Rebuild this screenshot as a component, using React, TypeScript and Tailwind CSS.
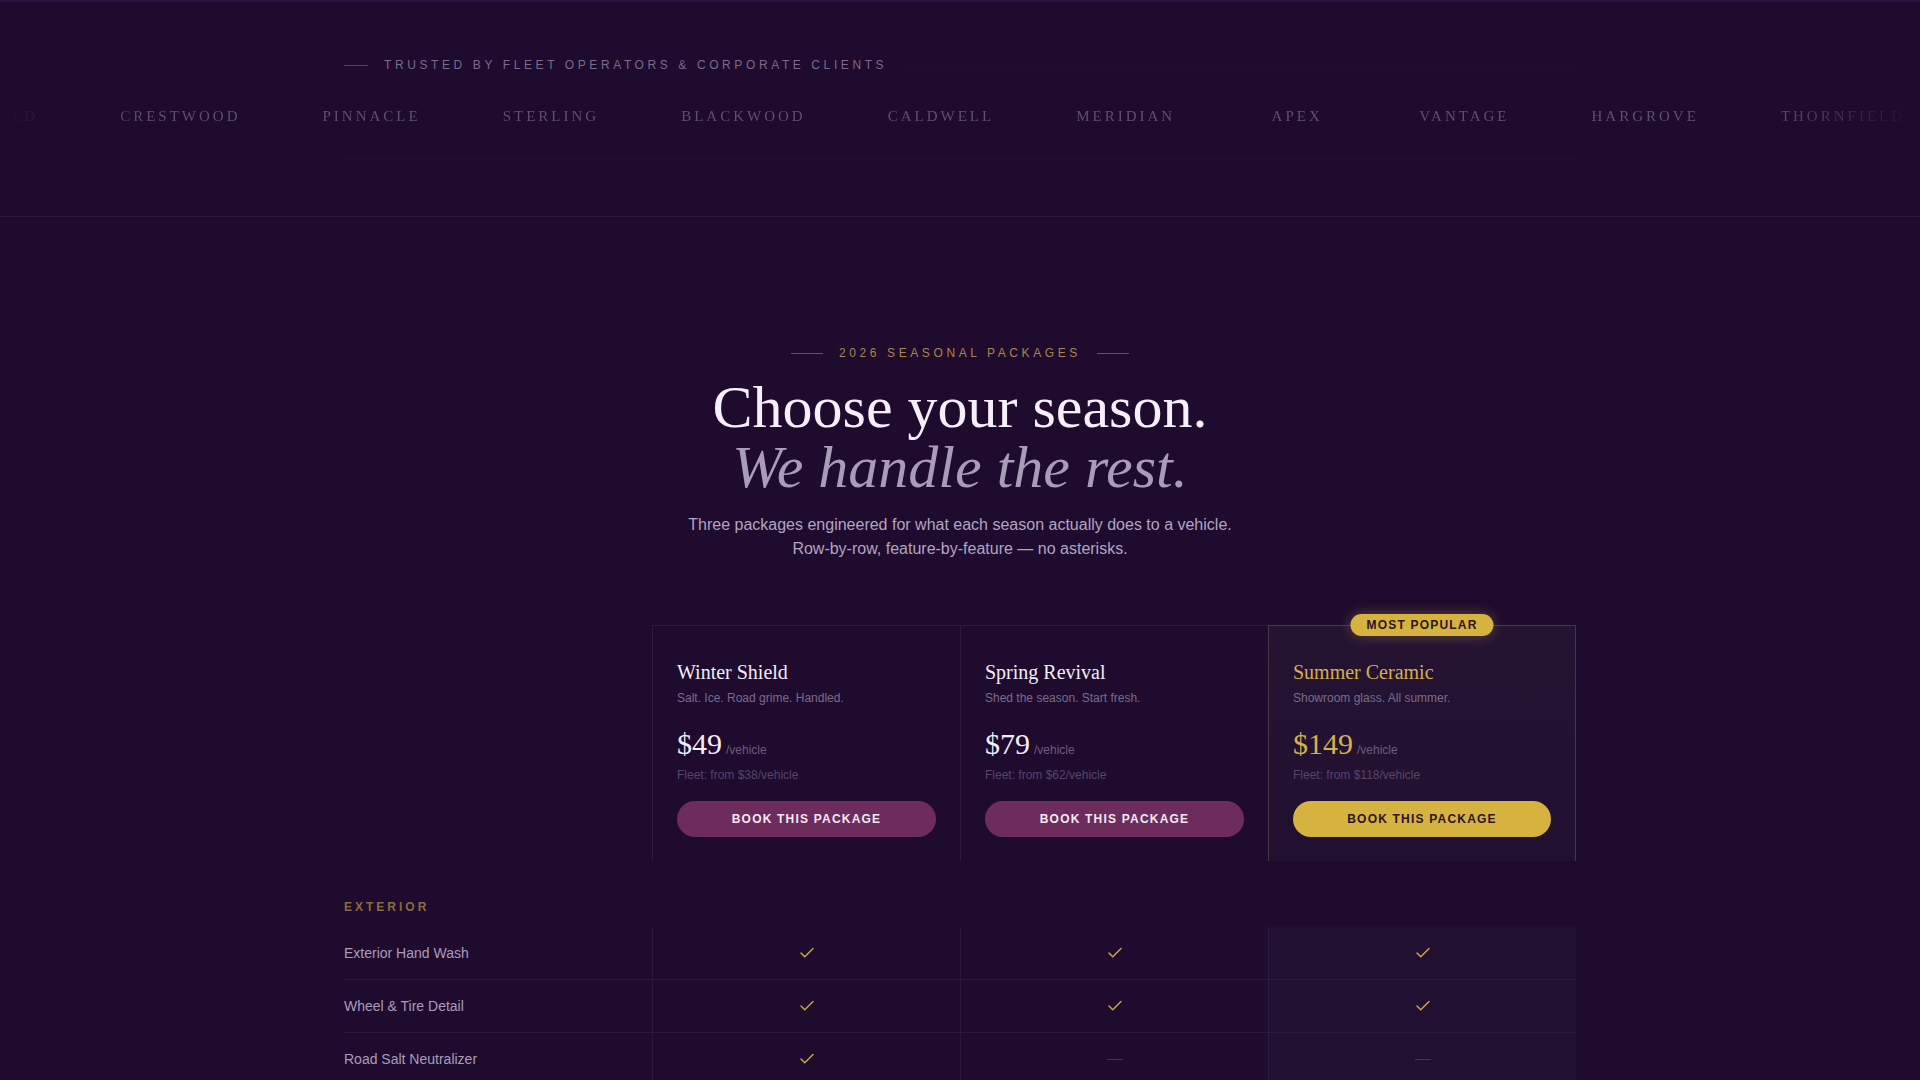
import { Fragment } from 'react';

const clients = [
  'THORNFIELD',
  'CRESTWOOD',
  'PINNACLE',
  'STERLING',
  'BLACKWOOD',
  'CALDWELL',
  'MERIDIAN',
  'APEX',
  'VANTAGE',
  'HARGROVE',
  'THORNFIELD',
  'CRESTWOOD',
];

const plans = [
  {
    name: 'Winter Shield',
    tagline: 'Salt. Ice. Road grime. Handled.',
    price: '$49',
    fleet: 'Fleet: from $38/vehicle',
    popular: false,
  },
  {
    name: 'Spring Revival',
    tagline: 'Shed the season. Start fresh.',
    price: '$79',
    fleet: 'Fleet: from $62/vehicle',
    popular: false,
  },
  {
    name: 'Summer Ceramic',
    tagline: 'Showroom glass. All summer.',
    price: '$149',
    fleet: 'Fleet: from $118/vehicle',
    popular: true,
  },
];

type Row = { label: string; values: boolean[] };

const groups: { title: string; rows: Row[] }[] = [
  {
    title: 'EXTERIOR',
    rows: [
      { label: 'Exterior Hand Wash', values: [true, true, true] },
      { label: 'Wheel & Tire Detail', values: [true, true, true] },
      { label: 'Road Salt Neutralizer', values: [true, false, false] },
      { label: 'Undercarriage Flush', values: [true, true, false] },
      { label: 'Clay Bar Decontamination', values: [false, true, true] },
      { label: '12-Month Ceramic Coating', values: [false, false, true] },
    ],
  },
  {
    title: 'INTERIOR',
    rows: [
      { label: 'Vacuum & Wipe Down', values: [true, true, true] },
      { label: 'Salt Stain Extraction', values: [true, false, false] },
      { label: 'Pollen & Allergen Treatment', values: [false, true, true] },
    ],
  },
];

const CheckIcon = () => (
  <svg
    width="18"
    height="18"
    viewBox="0 0 24 24"
    fill="none"
    stroke="currentColor"
    strokeWidth="2"
    strokeLinecap="round"
    strokeLinejoin="round"
    className="text-[#c9a545]"
  >
    <path d="M20 6 9 17l-5-5" />
  </svg>
);

const TrustedBar = () => (
  <section className="border-t-2 border-b border-t-[#2c1440] border-b-[#2a1a3c] pt-[55px] pb-14">
    <div className="max-w-7xl mx-auto px-6">
      <div className="flex items-center gap-4">
        <span className="w-6 h-px bg-[#5a4632]" />
        <span className="text-xs leading-4 tracking-[0.3em] text-[#7a6c8a]">
          TRUSTED BY FLEET OPERATORS &amp; CORPORATE CLIENTS
        </span>
        <span className="flex-1 h-px bg-[#21102c]" />
      </div>
    </div>

    {/* client names, faded out at both edges */}
    <div className="mt-8 overflow-hidden [mask-image:linear-gradient(to_right,transparent,black_8%,black_92%,transparent)]">
      <div className="flex items-center gap-[82px] -ml-[86px] whitespace-nowrap">
        {clients.map((c, i) => (
          <span
            key={i}
            className="shrink-0 min-w-20 text-center font-['Liberation_Serif',serif] text-[15px] leading-[22px] tracking-[0.2em] text-[#5f4f70]"
          >
            {c}
          </span>
        ))}
      </div>
    </div>

    <div className="max-w-7xl mx-auto px-6">
      <div className="mt-8 h-px bg-[#21102c]" />
    </div>
  </section>
);

const PlanCard = ({ plan }) => {
  const popular = plan.popular;
  return (
    <div
      className={
        popular
          ? 'relative border border-b-0 border-[#4a3840] bg-gradient-to-b from-[#251332] to-[#211030] px-6 pt-8 pb-6'
          : 'relative border-t border-l border-[#2e1c40] px-6 pt-8 pb-6'
      }
    >
      {popular && (
        <span className="absolute left-1/2 -translate-x-1/2 -top-3 rounded-full bg-[#d6b23e] px-4 py-[3px] text-xs leading-4 font-bold tracking-widest text-[#2a1428] shadow-[0_0_14px_rgba(214,178,62,0.35)] whitespace-nowrap">
          MOST POPULAR
        </span>
      )}
      <h3
        className={
          popular
            ? "font-['Liberation_Serif',serif] text-xl leading-7 text-[#d6b04a]"
            : "font-['Liberation_Serif',serif] text-xl leading-7 text-[#f3eef7]"
        }
      >
        {plan.name}
      </h3>
      <p className="mt-1 text-xs leading-4 text-[#7b6c8b]">{plan.tagline}</p>
      <div className="mt-5 flex items-baseline gap-1">
        <span
          className={
            popular
              ? "font-['Liberation_Serif',serif] text-3xl leading-9 text-[#d6b04a]"
              : "font-['Liberation_Serif',serif] text-3xl leading-9 text-[#f3eef7]"
          }
        >
          {plan.price}
        </span>
        <span className="text-xs text-[#6c5d7c]">/vehicle</span>
      </div>
      <p className="mt-[5px] text-xs leading-4 text-[#56476a]">{plan.fleet}</p>
      <button
        className={
          popular
            ? 'mt-[18px] w-full h-9 rounded-full bg-[#d6b23e] text-xs font-bold tracking-widest text-[#2a1428]'
            : 'mt-[18px] w-full h-9 rounded-full bg-[#6d2c5c] text-xs font-bold tracking-widest text-[#f4e9f1]'
        }
      >
        BOOK THIS PACKAGE
      </button>
    </div>
  );
};

const FeatureRow = ({ row }: { row: Row }) => (
  <div className="grid grid-cols-4 border-b border-[#2c1a3e]">
    <div className="h-[52px] flex items-center text-sm text-[#ab9dba]">{row.label}</div>
    {row.values.map((v, i) => (
      <div
        key={i}
        className={
          i === 2
            ? 'flex items-center justify-center border-l border-[#2c1a3e] bg-[#221032]'
            : 'flex items-center justify-center border-l border-[#2c1a3e]'
        }
      >
        {v ? <CheckIcon /> : <span className="block w-4 h-px bg-[#46365a]" />}
      </div>
    ))}
  </div>
);

const Pricing = () => (
  <section className="pt-32 pb-32">
    <div className="max-w-7xl mx-auto px-6">
      <div className="flex items-center justify-center gap-4">
        <span className="w-8 h-px bg-[#6a5535]" />
        <span className="text-xs leading-4 tracking-[0.3em] text-[#a8884a]">2026 SEASONAL PACKAGES</span>
        <span className="w-8 h-px bg-[#6a5535]" />
      </div>

      <h2 className="mt-4 text-center font-['Liberation_Serif',serif] text-6xl leading-none text-[#f5f0fa]">
        Choose your season.
        <br />
        <em className="text-[#a99cb6]">We handle the rest.</em>
      </h2>

      <p className="mt-4 text-center text-base leading-6 text-[#b2a5c0]">
        Three packages engineered for what each season actually does to a vehicle.
        <br />
        Row-by-row, feature-by-feature — no asterisks.
      </p>

      <div className="mt-16 grid grid-cols-4">
        <div />
        {plans.map((p) => (
          <PlanCard key={p.name} plan={p} />
        ))}
      </div>

      {groups.map((g) => (
        <Fragment key={g.title}>
          <div className="pt-[38px] pb-3 text-xs leading-4 font-bold tracking-[0.25em] text-[#8a6d3e]">
            {g.title}
          </div>
          {g.rows.map((r) => (
            <FeatureRow key={r.label} row={r} />
          ))}
        </Fragment>
      ))}
    </div>
  </section>
);

const App = () => {
  return (
    <div className="min-h-screen bg-[#1e0b2e] font-['Liberation_Sans',Arial,sans-serif]">
      <TrustedBar />
      <Pricing />
    </div>
  );
};

export default App;
